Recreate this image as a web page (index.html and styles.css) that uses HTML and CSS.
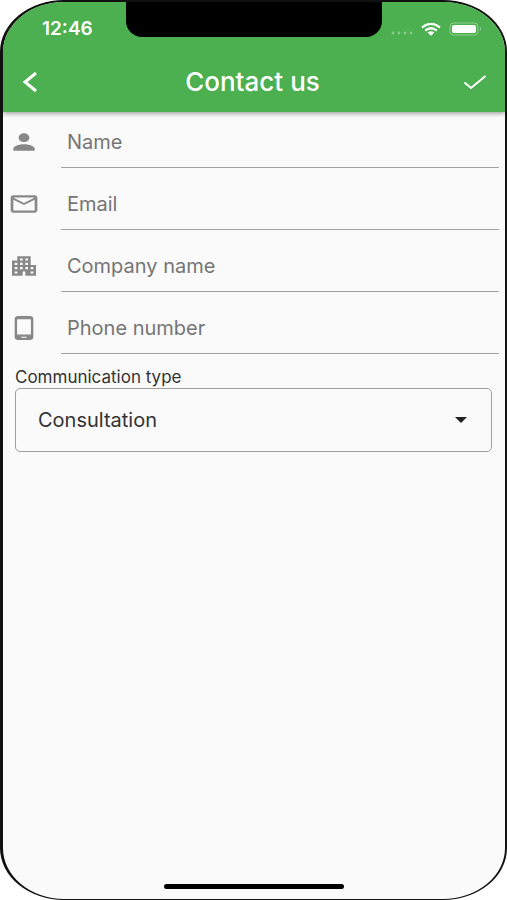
FILE: index.html
```html
<!DOCTYPE html>
<html lang="en">
<head>
<meta charset="utf-8">
<meta name="viewport" content="width=device-width, initial-scale=1">
<title>Contact us</title>
<link rel="stylesheet" href="styles.css">
</head>
<body>
<div class="phone">
  <header class="top">
    <div class="status">
      <span class="time">12:46</span>
      <span class="notch"></span>
      <span class="signals">
        <svg class="dots" viewBox="0 0 22 4" aria-hidden="true"><circle cx="2" cy="2" r="1.4"/><circle cx="8" cy="2" r="1.4"/><circle cx="14" cy="2" r="1.4"/><circle cx="20" cy="2" r="1.4"/></svg>
        <svg class="wifi" viewBox="0 0 20 13" aria-hidden="true"><path d="M1 4.6Q10-2.8 19 4.6M4.2 7.6Q10 2.8 15.8 7.6" fill="none" stroke="#fff" stroke-width="2.3"/><path d="M6.6 9.6Q10 6.8 13.4 9.6L10 12.8Z" fill="#fff"/></svg>
        <svg class="battery" viewBox="0 0 34 14" aria-hidden="true"><rect x="1" y="1" width="28" height="12" rx="3.5" fill="none" stroke="#fff" stroke-opacity=".4"/><rect x="3" y="3" width="24" height="8" rx="2" fill="#fff"/><path d="M31 5q2 2 0 4z" fill="#fff" fill-opacity=".5"/></svg>
      </span>
    </div>
    <nav class="bar">
      <button class="action" type="button" aria-label="Back"><svg class="back" viewBox="0 0 16 22" aria-hidden="true"><path d="M14 2 3 11l11 9"/></svg></button>
      <h1>Contact us</h1>
      <button class="action" type="submit" form="contact" aria-label="Send"><svg class="check" viewBox="0 0 24 16" aria-hidden="true"><path d="M1.500 8.500 8 14 22.500 2"/></svg></button>
    </nav>
  </header>
  <form id="contact">
    <div class="row">
      <label for="name"><svg class="icon" viewBox="0 0 24 24" preserveAspectRatio="none" role="img" aria-label="Name"><path d="M12 12c2.210 0 4-1.790 4-4s-1.790-4-4-4-4 1.790-4 4 1.790 4 4 4zm0 2c-2.670 0-8 1.340-8 4v2h16v-2c0-2.660-5.330-4-8-4z"/></svg></label>
      <input id="name" type="text" placeholder="Name">
    </div>
    <div class="row">
      <label for="email"><svg class="icon" viewBox="0 0 24 24" preserveAspectRatio="none" role="img" aria-label="Email"><path d="M22 6c0-1.100-.9-2-2-2H4c-1.100 0-2 .9-2 2v12c0 1.100.9 2 2 2h16c1.100 0 2-.9 2-2V6zm-2 0-8 5-8-5h16zm0 12H4V8l8 5 8-5v10z"/></svg></label>
      <input id="email" type="email" placeholder="Email">
    </div>
    <div class="row">
      <label for="company"><svg class="icon" viewBox="0 0 24 24" preserveAspectRatio="none" role="img" aria-label="Company name"><path d="M17 11V3H7v4H3v14h8v-4h2v4h8V11h-4zM7 19H5v-2h2v2zm0-4H5v-2h2v2zm0-4H5V9h2v2zm4 4H9v-2h2v2zm0-4H9V9h2v2zm0-4H9V5h2v2zm4 8h-2v-2h2v2zm0-4h-2V9h2v2zm0-4h-2V5h2v2zm4 12h-2v-2h2v2zm0-4h-2v-2h2v2z"/></svg></label>
      <input id="company" type="text" placeholder="Company name">
    </div>
    <div class="row">
      <label for="phone"><svg class="icon" viewBox="0 0 24 24" preserveAspectRatio="none" role="img" aria-label="Phone number"><path fill-rule="evenodd" d="M16.500 1h-9C6.100 1 5 2.100 5 3.500v17C5 21.900 6.100 23 7.500 23h9c1.400 0 2.500-1.100 2.500-2.500v-17C19 2.100 17.900 1 16.500 1zM14 21h-4v-1h4v1zm3.200-3H6.800V4h10.400v14z"/></svg></label>
      <input id="phone" type="tel" placeholder="Phone number">
    </div>
    <div class="choice">
      <label for="type">Communication type</label>
      <div class="select">
        <select id="type"><option>Consultation</option></select>
        <svg class="arrow" viewBox="0 0 12 6" aria-hidden="true"><path d="M0 0h12L6 6z"/></svg>
      </div>
    </div>
  </form>
  <div class="home"></div>
</div>
</body>
</html>
```
FILE: styles.css
```css
* {
  box-sizing: border-box;
}

body {
  margin: 0;
  background: #fff;
  font-family: Inter, "Liberation Sans", sans-serif;
  color: #333;
}

.phone {
  display: flex;
  flex-direction: column;
  min-height: 100vh;
  overflow: hidden;
  border: 2px solid #111;
  border-left-width: 3px;
  border-bottom-width: 1px;
  border-radius: 64px / 52px;
  background: #fafafa;
}

.top {
  background: #4caf50;
  color: #fff;
  box-shadow: 0 1px 5px rgba(0, 0, 0, 0.45);
}

.status {
  display: grid;
  grid-template-columns: 1fr 256px 1fr;
  height: 50px;
}

.time {
  padding: 16px 0 0 39px;
  font-size: 19px;
  font-weight: 600;
  line-height: 22px;
}

.notch {
  height: 35px;
  border-radius: 0 0 16px 16px;
  background: #000;
}

.signals {
  display: flex;
  align-items: center;
  justify-content: flex-end;
  gap: 8px;
  height: 54px;
  padding-right: 22px;
}

.dots {
  width: 22px;
  height: 4px;
  margin-top: 8px;
  fill: #fff;
  opacity: 0.35;
}

.wifi {
  width: 20px;
  height: 13px;
}

.battery {
  width: 34px;
  height: 14px;
}

.bar {
  display: flex;
  align-items: center;
  justify-content: space-between;
  height: 60px;
  padding: 0 8px 0 5px;
}

h1 {
  margin: 0;
  font-size: 26px;
  font-weight: 500;
  line-height: 32px;
}

.action {
  display: grid;
  place-items: center;
  width: 44px;
  height: 44px;
  padding: 0;
  border: 0;
  background: none;
}

.action path {
  fill: none;
  stroke: #fff;
  stroke-width: 3;
}

.action .check path {
  stroke-width: 2;
}

.back {
  width: 16px;
  height: 22px;
}

.check {
  width: 24px;
  height: 16px;
}

form {
  display: flex;
  flex-direction: column;
  gap: 6px;
}

.row {
  display: flex;
  align-items: center;
  gap: 21px;
  height: 56px;
  padding: 0 6px 0 5px;
}

.row label {
  display: flex;
  padding-top: 4px;
}

.icon {
  width: 32px;
  height: 26px;
  fill: #888;
}

input {
  flex: 1;
  min-width: 0;
  height: 56px;
  padding: 4px 6px 0;
  border: 0;
  border-bottom: 1px solid #a0a0a0;
  border-radius: 0;
  outline: 0;
  background: none;
  color: #333;
  font: 20px Inter, "Liberation Sans", sans-serif;
}

input::placeholder {
  color: #757575;
  opacity: 1;
}

.choice {
  display: flex;
  flex-direction: column;
  padding: 6px 13px 0 12px;
}

.choice label {
  font-size: 17px;
  line-height: 22px;
}

.select {
  display: grid;
  align-items: center;
}

.select > * {
  grid-area: 1 / 1;
}

select {
  appearance: none;
  width: 100%;
  height: 64px;
  padding: 0 22px;
  border: 1px solid #a0a0a0;
  border-radius: 5px;
  background: none;
  color: #333;
  font: 20px Inter, "Liberation Sans", sans-serif;
}

.arrow {
  justify-self: end;
  width: 12px;
  height: 6px;
  margin-right: 25px;
  fill: #222;
  pointer-events: none;
}

.home {
  width: 36%;
  height: 5px;
  margin: auto auto 10px;
  border-radius: 3px;
  background: #000;
}
```
